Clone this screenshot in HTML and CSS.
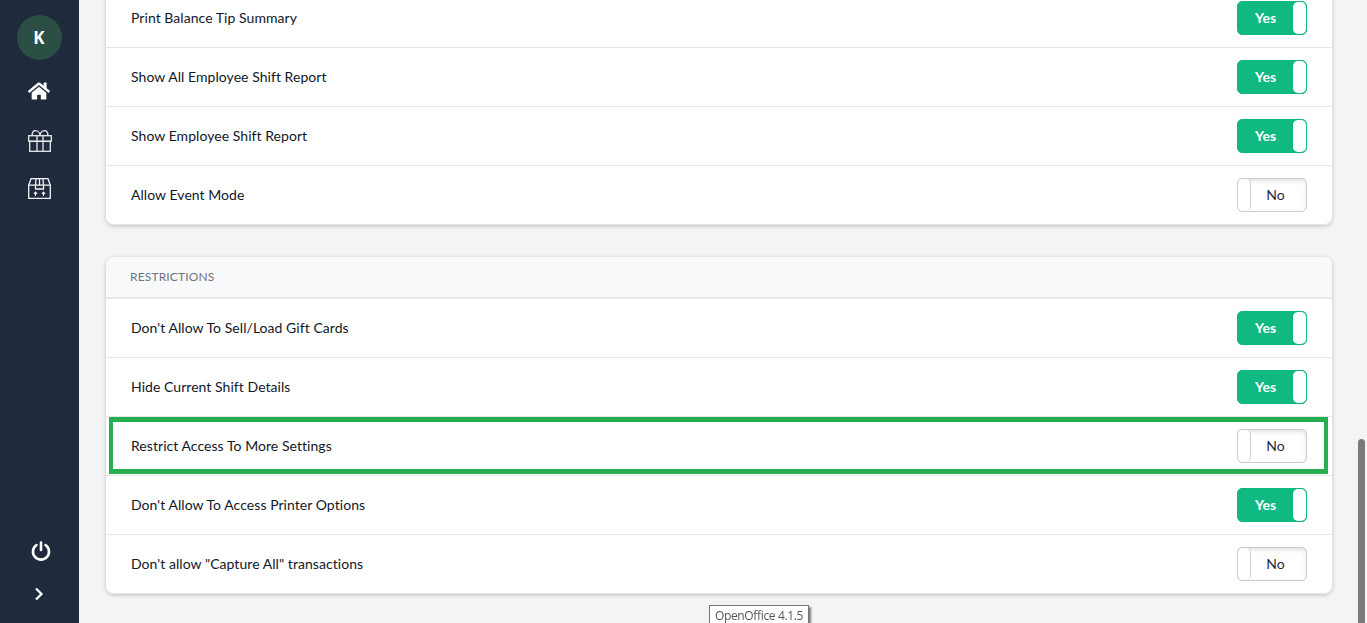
FILE: index.html
```html
<!DOCTYPE html>
<html lang="en">
<head>
  <meta charset="UTF-8">
  <title>Settings</title>
  <link rel="stylesheet" href="styles.css">
</head>
<body>

<div class="app">
  <nav class="sidebar">
    <div class="avatar">K</div>
    <a class="nav-icon home-icon">
      <svg width="22" height="20" viewBox="0 0 576 512" fill="#fff"><path d="M280.37 148.26L96 300.11V464a16 16 0 0 0 16 16l112.06-.29a16 16 0 0 0 15.92-16V368a16 16 0 0 1 16-16h64a16 16 0 0 1 16 16v95.64a16 16 0 0 0 16 16.05L464 480a16 16 0 0 0 16-16V300L295.67 148.26a12.19 12.19 0 0 0-15.3 0zM571.6 251.47L488 182.56V44.05a12 12 0 0 0-12-12h-56a12 12 0 0 0-12 12v72.61L318.47 43a48 48 0 0 0-61 0L4.34 251.47a12 12 0 0 0-1.6 16.9l25.5 31A12 12 0 0 0 45.15 301l235.22-193.74a12.19 12.19 0 0 1 15.3 0L530.9 301a12 12 0 0 0 16.9-1.6l25.5-31a12 12 0 0 0-1.7-16.93z"/></svg>
    </a>
    <a class="nav-icon gift-icon">
      <svg width="24" height="22" viewBox="0 0 24 22" fill="none" stroke="#e8eaee" stroke-width="1.300"><rect x="0.700" y="5.700" width="22.600" height="5.600"/><rect x="1.700" y="11.300" width="20.600" height="10"/><path d="M9 5.700v15.600M15 5.700v15.600"/><path d="M4.200 5.700C3.800 2.200 5.500.7 7.500.7c2.500 0 4.500 2.200 4.500 5 0-2.800 2-5 4.500-5 2 0 3.700 1.500 3.300 5"/></svg>
    </a>
    <a class="nav-icon box-icon">
      <svg width="23" height="21" viewBox="0 0 23 21" fill="none" stroke="#f2f3f5" stroke-width="1.300"><path d="M.7 7.200h21.600v13.100H.7zM.7 7.200 3 .7h17l2.300 6.500"/><path d="M8 .7 7.500 7.200M15 .7l.5 6.500M11.500.7v6.500"/><path d="M7.500 7.200v3.800h8V7.200"/><path d="M7.500 18v-3.500M5.800 16l1.700-2 1.700 2M15.500 18v-3.500M13.800 16l1.700-2 1.700 2" stroke-width="1.100"/></svg>
    </a>
    <div class="sidebar-bottom">
      <a class="nav-icon power-icon">
        <svg width="20" height="20" viewBox="0 0 20 20" fill="none" stroke="#fff" stroke-width="2.600" stroke-linecap="round"><path d="M14.500 4a8 8 0 1 1-9 0"/><path d="M10 1.500V9"/></svg>
      </a>
      <a class="nav-icon chevron-icon">
        <svg width="10" height="14" viewBox="0 0 10 14" fill="none" stroke="#fff" stroke-width="2.200"><path d="M2 1.500 7.500 7 2 12.500"/></svg>
      </a>
    </div>
  </nav>

  <main class="content">
    <section class="card card-top">
      <div class="row"><span class="label">Print Balance Tip Summary</span><div class="toggle on"><span>Yes</span><i></i></div></div>
      <div class="row"><span class="label">Show All Employee Shift Report</span><div class="toggle on"><span>Yes</span><i></i></div></div>
      <div class="row"><span class="label">Show Employee Shift Report</span><div class="toggle on"><span>Yes</span><i></i></div></div>
      <div class="row"><span class="label">Allow Event Mode</span><div class="toggle off"><i></i><span>No</span></div></div>
    </section>

    <section class="card">
      <div class="card-header">RESTRICTIONS</div>
      <div class="row"><span class="label">Don't Allow To Sell/Load Gift Cards</span><div class="toggle on"><span>Yes</span><i></i></div></div>
      <div class="row"><span class="label">Hide Current Shift Details</span><div class="toggle on"><span>Yes</span><i></i></div></div>
      <div class="row highlighted"><span class="label">Restrict Access To More Settings</span><div class="toggle off"><i></i><span>No</span></div></div>
      <div class="row"><span class="label">Don't Allow To Access Printer Options</span><div class="toggle on"><span>Yes</span><i></i></div></div>
      <div class="row"><span class="label">Don't allow "Capture All" transactions</span><div class="toggle off"><i></i><span>No</span></div></div>
    </section>
  </main>
</div>

<div class="scroll-thumb"></div>
<div class="file-tooltip">OpenOffice 4.1.5</div>

</body>
</html>
```

FILE: styles.css
```css
html, body {
  margin: 0;
  height: 100%;
  overflow: hidden;
}

body {
  font-family: "Lato", "Noto Sans", sans-serif;
  background-color: #f3f4f6;
  color: #111827;
}

.app {
  display: flex;
  height: 623px;
}

.sidebar {
  width: 79px;
  flex-shrink: 0;
  background-color: #1f2a3c;
  display: flex;
  flex-direction: column;
  align-items: center;
  padding-top: 15px;
  box-sizing: border-box;
}

.avatar {
  width: 45px;
  height: 45px;
  border-radius: 50%;
  background-color: #2b4f45;
  color: #fff;
  font-family: "Noto Sans", sans-serif;
  font-weight: 700;
  font-size: 17px;
  display: flex;
  align-items: center;
  justify-content: center;
  margin-right: 1px;
}

.nav-icon {
  display: flex;
  justify-content: center;
}

.home-icon {
  margin-top: 21px;
  margin-right: 1px;
}

.gift-icon {
  margin-top: 29px;
}

.box-icon {
  margin-top: 26px;
}

.sidebar-bottom {
  margin-top: auto;
  padding-bottom: 22px;
  display: flex;
  flex-direction: column;
  align-items: center;
}

.power-icon {
  margin-left: 3px;
}

.chevron-icon {
  margin-top: 26px;
  margin-right: 2px;
}

.content {
  flex: 1;
  padding: 0 35px 0 27px;
  min-width: 0;
}

.card {
  background-color: #fff;
  border-radius: 8px;
  box-shadow: 0 1px 4px rgba(0, 0, 0, 0.22);
  margin-bottom: 32px;
}

.card-top {
  margin-top: -11px;
}

.card-header {
  height: 42px;
  padding: 0 24px 2px;
  box-sizing: border-box;
  display: flex;
  align-items: center;
  font-size: 12px;
  letter-spacing: 0.15px;
  color: #6f7480;
  background-color: #f8f9fb;
  border-bottom: 2px solid #e7e8ec;
  border-radius: 8px 8px 0 0;
}

.row {
  height: 58px;
  padding: 0 25px;
  display: flex;
  align-items: center;
  justify-content: space-between;
  border-bottom: 1px solid #e6e6e6;
  position: relative;
}

.row:last-child {
  border-radius: 0 0 8px 8px;
}

.label {
  font-size: 14px;
  letter-spacing: 0.05px;
  color: #111827;
  padding-bottom: 2px;
}

.toggle {
  width: 70px;
  height: 34px;
  box-sizing: border-box;
  border-radius: 5px;
  display: flex;
  align-items: center;
  font-size: 14px;
}

.toggle i {
  width: 13px;
  height: 100%;
  box-sizing: border-box;
  background-color: #fff;
  border-radius: 5px;
}

.toggle span {
  flex: 1;
  text-align: center;
  padding-bottom: 2px;
}

.toggle.on {
  background-color: #10b981;
  border: 1px solid #10b981;
  color: #fff;
  font-weight: 700;
}

.toggle.off {
  background-color: #fff;
  border: 1px solid #ccc;
  box-shadow: inset 0 2px 4px rgba(0, 0, 0, 0.12);
  color: #1f2a3c;
}

.toggle.off i {
  border-right: 1px solid #ccc;
}

.toggle.off span {
  padding-right: 6px;
}

.highlighted::after {
  content: "";
  position: absolute;
  left: 3px;
  right: 4px;
  top: 0;
  bottom: 1px;
  border: 5px solid #27ae50;
  border-left-width: 4px;
  border-right-width: 4px;
  pointer-events: none;
}

.scroll-thumb {
  position: fixed;
  right: 2px;
  top: 439px;
  bottom: 0;
  width: 7px;
  border-radius: 4px 4px 0 0;
  background-color: #7b7b7b;
}

.file-tooltip {
  position: fixed;
  left: 709px;
  top: 605px;
  height: 20px;
  padding: 0 5px;
  line-height: 19px;
  font-family: "Open Sans", sans-serif;
  font-size: 12px;
  letter-spacing: -0.35px;
  color: #555;
  background-color: #fff;
  border: 1px solid #767676;
  box-shadow: 2px 2px 2px rgba(0, 0, 0, 0.5);
}
```
